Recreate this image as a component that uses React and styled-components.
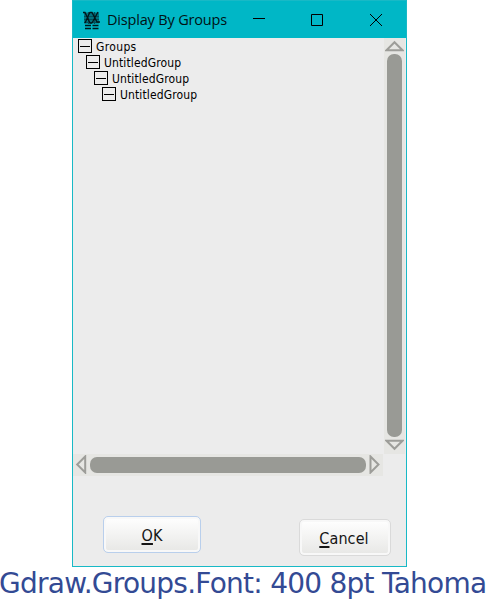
import React from "react";
import styled, { createGlobalStyle } from "styled-components";

const Global = createGlobalStyle`
  * { box-sizing: border-box; }
  body { margin: 0; background: #fff; overflow: hidden; }
`;

const Page = styled.main`
  width: 486px;
  height: 599px;
`;

const Window = styled.section`
  width: 335px;
  height: 567px;
  margin-left: 72px;
  display: flex;
  flex-direction: column;
  background: #ececec;
  border: 1px solid #18b9c6;
  border-top: 0;
`;

const TitleBar = styled.header`
  height: 38px;
  flex: none;
  display: flex;
  align-items: center;
  background: #00b7c6;
  border-top: 1px solid #18b9c6;
  padding-left: 10px;
`;

const Title = styled.h1`
  margin: 0 0 0 6px;
  width: 121px;
  font: 400 14.5px/20px "Open Sans", "Noto Sans", sans-serif;
  letter-spacing: -0.18px;
  white-space: nowrap;
  color: #001214;
`;

const Controls = styled.div`
  display: flex;
  margin-left: 19px;
  gap: 34px;
`;

const ControlButton = styled.button`
  width: 24px;
  height: 24px;
  padding: 0;
  border: 0;
  background: none;
  display: grid;
  place-items: center;
  &:last-child { margin-left: 1px; }
`;

const Viewport = styled.div`
  display: grid;
  grid-template-columns: 311px 22px;
  grid-template-rows: 416px 22px;
  flex: none;
`;

const Tree = styled.ul`
  margin: 0;
  padding: 1px 0 0 5px;
  list-style: none;
`;

const TreeRow = styled.li`
  height: 16px;
  display: flex;
  align-items: flex-start;
  gap: 4px;
  padding-left: ${(p) => p.$depth * 8}px;
  font: 400 12px/16px "DejaVu Sans Condensed", "DejaVu Sans", sans-serif;
  font-stretch: condensed;
  letter-spacing: ${(p) => (p.$depth ? "0.13px" : "0.35px")};
  color: #000;
  white-space: nowrap;
`;

const Toggle = styled.span`
  width: 14px;
  height: 14px;
  flex: none;
  border: 1px solid #000;
  display: grid;
  place-items: center;
  &::before {
    content: "";
    width: 10px;
    height: 1px;
    background: #000;
  }
`;

const VScroll = styled.div`
  width: 21px;
  background: #e6e6e3;
  display: flex;
  flex-direction: column;
  align-items: center;
  padding: 2px 0 3px;
`;

const HScroll = styled.div`
  width: 310px;
  background: #e6e6e3;
  display: flex;
  align-items: center;
  padding: 0 2px 1px;
`;

const Thumb = styled.div`
  flex: 1;
  background: #999a95;
  border-radius: 7px;
  ${(p) => (p.$vertical ? "width: 15px;" : "height: 16px;")}
`;

const Arrow = styled.svg`
  display: block;
  flex: none;
  fill: none;
  stroke: #9d9d99;
  stroke-width: 2;
`;

const Footer = styled.footer`
  flex: 1;
  display: flex;
  justify-content: space-between;
  align-items: flex-start;
  padding: 40px 15px 0 30px;
`;

const PushButton = styled.button`
  width: ${(p) => p.$width}px;
  height: 37px;
  margin: 0;
  margin-top: ${(p) => p.$drop || 0}px;
  padding: 3px ${(p) => (p.$primary ? 0 : 2)}px 0 0;
  border: 1px solid ${(p) => (p.$primary ? "#b9cfec" : "#dadada")};
  border-radius: 5px;
  background: linear-gradient(#fff, #e7e7e5);
  box-shadow: inset 0 0 0 2px #f8f8f8;
  font: 400 16px/20px "DejaVu Sans Condensed", "DejaVu Sans", sans-serif;
  font-stretch: condensed;
  letter-spacing: 0.1px;
  color: #151515;
`;

const Mnemonic = styled.span`
  text-decoration: underline;
  text-decoration-thickness: 2px;
  text-underline-offset: 2px;
  text-decoration-skip-ink: none;
`;

const Caption = styled.p`
  margin: 0;
  padding-top: 1px;
  font: 400 28px/31px "DejaVu Sans", sans-serif;
  letter-spacing: -0.75px;
  text-indent: -1px;
  white-space: nowrap;
  color: #334a94;
`;

function AppIcon() {
  return (
    <svg width="18" height="20" viewBox="0 0 18 20" fill="none" stroke="#00161a">
      <path d="M1 2.5h15v11h-15z" fill="#00727e" stroke="none" />
      <path d="M1 6.5h15M1 9.5h15M1 12.5h15M5.5 2v12M11.5 2v12" stroke="#00505a" strokeWidth="1" />
      <path d="M0 2.5h2l5 10.5h2M7 2.5h2l5 9.5h3M7 2L2 13M15 2L9 13" strokeWidth="1.3" />
      <path d="M2 15.5h6M9.5 15.5h6M2 18.5h6M9.5 18.5h6" strokeWidth="1.4" />
    </svg>
  );
}

const groups = ["Groups", "UntitledGroup", "UntitledGroup", "UntitledGroup"];

export default function App() {
  return (
    <Page>
      <Global />
      <Window>
        <TitleBar>
          <AppIcon />
          <Title>Display By Groups</Title>
          <Controls>
            <ControlButton aria-label="Minimize">
              <svg width="12" height="12" stroke="#000"><path d="M0 4.5h12" /></svg>
            </ControlButton>
            <ControlButton aria-label="Maximize">
              <svg width="12" height="12" stroke="#000" fill="none"><path d="M.5 .5h11v11H.5z" /></svg>
            </ControlButton>
            <ControlButton aria-label="Close">
              <svg width="12" height="12" stroke="#000"><path d="M0 0l12 12M12 0L0 12" /></svg>
            </ControlButton>
          </Controls>
        </TitleBar>
        <Viewport>
          <Tree>
            {groups.map((name, depth) => (
              <TreeRow key={depth} $depth={depth}>
                <Toggle />
                {name}
              </TreeRow>
            ))}
          </Tree>
          <VScroll>
            <Arrow width="19" height="14"><path d="M1.5 10.2L9.5 2.2L17.5 10.2z" /></Arrow>
            <Thumb $vertical />
            <Arrow width="19" height="14"><path d="M1.5 3.8L9.5 11.8L17.5 3.8z" /></Arrow>
          </VScroll>
          <HScroll>
            <Arrow width="15" height="19"><path d="M10.2 1.5L2.2 9.5L10.2 17.5z" /></Arrow>
            <Thumb />
            <Arrow width="15" height="19"><path d="M4.5 1.5L12.5 9.5L4.5 17.5z" /></Arrow>
          </HScroll>
        </Viewport>
        <Footer>
          <PushButton $width={98} $primary><Mnemonic>O</Mnemonic>K</PushButton>
          <PushButton $width={92} $drop={3}><Mnemonic>C</Mnemonic>ancel</PushButton>
        </Footer>
      </Window>
      <Caption>Gdraw.Groups.Font: 400 8pt Tahoma</Caption>
    </Page>
  );
}
